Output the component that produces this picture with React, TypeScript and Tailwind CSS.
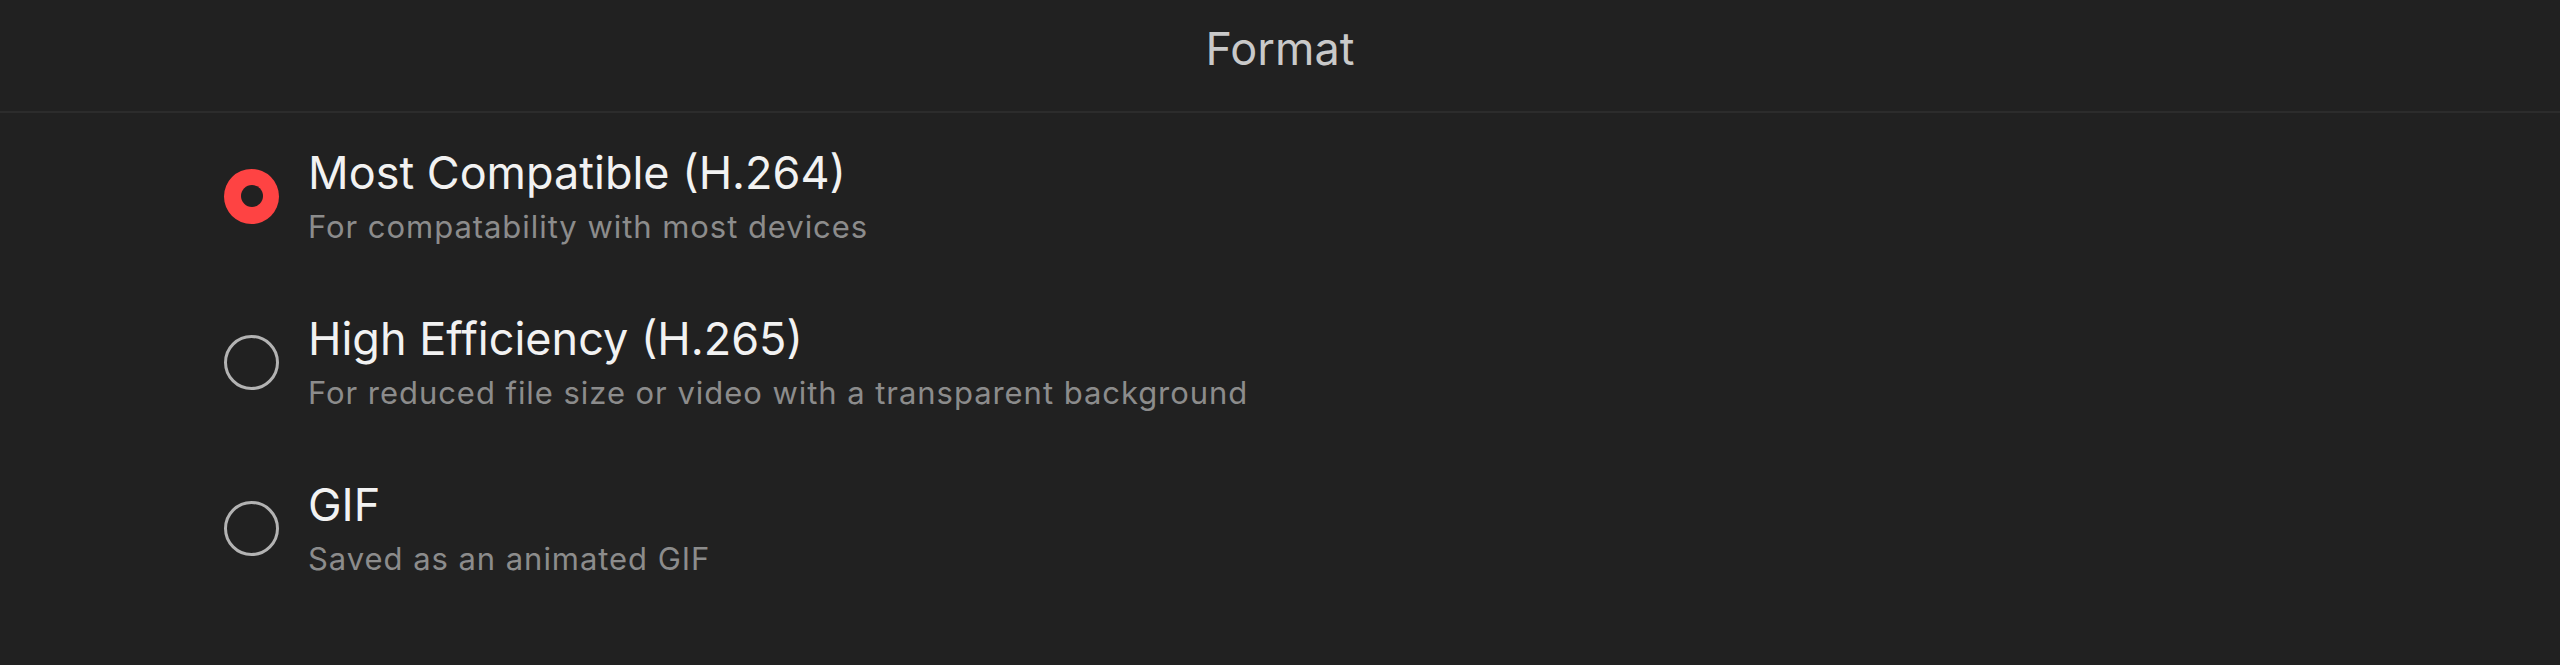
import React from 'react';

type Option = {
  title: string;
  subtitle: string;
};

const options: Option[] = [
  { title: 'Most Compatible (H.264)', subtitle: 'For compatability with most devices' },
  { title: 'High Efficiency (H.265)', subtitle: 'For reduced file size or video with a transparent background' },
  { title: 'GIF', subtitle: 'Saved as an animated GIF' },
];

const Radio: React.FC<{ checked: boolean }> = ({ checked }) =>
  checked ? (
    <div className="w-[55px] h-[55px] rounded-full bg-[#fe4343] flex items-center justify-center shrink-0">
      <div className="w-[22px] h-[22px] rounded-full bg-[#212121]" />
    </div>
  ) : (
    <div className="w-[55px] h-[55px] rounded-full border-[3px] border-[#b3b3b3] shrink-0" />
  );

const App: React.FC = () => {
  const selected = 0;
  return (
    <div
      className="w-[2560px] h-[665px] bg-[#212121] overflow-hidden"
      style={{ fontFamily: 'Inter, "Noto Sans", sans-serif' }}
    >
      <div className="h-[113px] border-b-2 border-[#2c2c2c] flex justify-center pt-[22px]">
        <h1 className="text-[45px] leading-[54px] text-[#c9c9c9]">Format</h1>
      </div>
      <div className="flex flex-col">
        {options.map((o, i) => (
          <div key={o.title} className="h-[166px] flex items-center pl-[224px] gap-[29px]">
            <Radio checked={i === selected} />
            <div className="flex flex-col gap-[9px] mt-[-2px]">
              <div className="text-[45px] leading-[54px] text-[#f2f2f2]">{o.title}</div>
              <div className="text-[31px] leading-[36px] tracking-[0.95px] text-[#8c8c8c]">{o.subtitle}</div>
            </div>
          </div>
        ))}
      </div>
    </div>
  );
};

export default App;
